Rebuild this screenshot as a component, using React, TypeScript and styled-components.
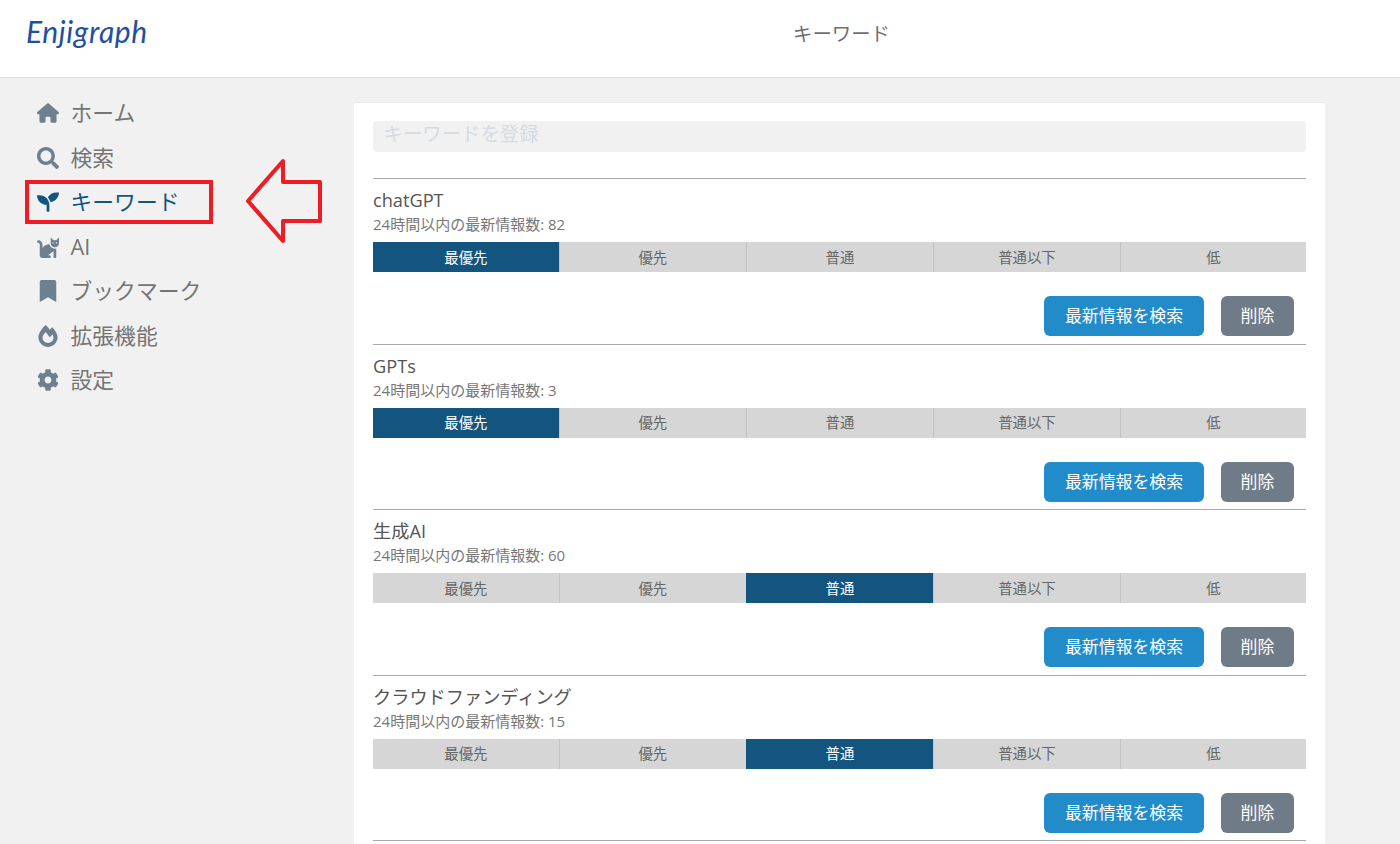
import React from "react";
import styled, { createGlobalStyle } from "styled-components";
import { FaSearch, FaSeedling, FaCat, FaBookmark, FaCog, FaFireAlt } from "react-icons/fa";
import { FaHouse } from "react-icons/fa6";

const Global = createGlobalStyle`
  html, body { margin: 0; padding: 0; height: 100%; overflow: hidden; background: #f1f1f1; }
  body { font-family: "Open Sans", "Noto Sans CJK JP", sans-serif; }
  * { box-sizing: border-box; }
`;

const Page = styled.div`
  width: 1400px;
  height: 844px;
  display: flex;
  flex-direction: column;
  overflow: hidden;
  background: #f1f1f1;
`;

const Header = styled.header`
  height: 78px;
  flex: none;
  display: flex;
  align-items: flex-start;
  background: #fff;
  border-bottom: 1px solid #d9dee2;
`;

const Logo = styled.div`
  width: 354px;
  padding: 12px 0 0 26px;
  font-family: "Lato", sans-serif;
  font-style: italic;
  font-size: 30px;
  line-height: 38px;
  letter-spacing: 0.6px;
  color: #1f4f9e;
`;

const PageTitle = styled.h1`
  flex: none;
  width: 975px;
  margin: 0;
  padding-top: 20px;
  text-align: center;
  font-size: 19.4px;
  line-height: 28px;
  font-weight: 400;
  color: #6f6f6f;
`;

const Body = styled.div`
  flex: 1;
  display: flex;
  min-height: 0;
`;

const Sidebar = styled.nav`
  position: relative;
  width: 354px;
  flex: none;
  padding: 13px 0 0 36px;
  display: flex;
  flex-direction: column;
`;

const NavItem = styled.div<{ $active?: boolean }>`
  position: relative;
  height: 44.5px;
  display: flex;
  align-items: center;
  gap: 10.5px;
  font-size: 21.8px;
  line-height: 30px;
  color: ${(p) => (p.$active ? "#14557f" : "#757575")};
`;

const NavIcon = styled.span<{ $active?: boolean }>`
  width: 24px;
  flex: none;
  display: flex;
  justify-content: center;
  font-size: 22px;
  color: ${(p) => (p.$active ? "#14557f" : "#6e7f8f")};
`;

const Highlight = styled.div`
  position: absolute;
  left: -11px;
  top: 0px;
  width: 188px;
  height: 44px;
  border: 4px solid #ee1c25;
`;

const Arrow = styled.svg`
  position: absolute;
  left: 209px;
  top: -22px;
  width: 80px;
  height: 88px;
`;

const Card = styled.main`
  width: 971px;
  flex: none;
  margin-top: 24px;
  padding: 18px 19px 0;
  background: #fff;
  border-top: 1px solid #e3e8ec;
  overflow: hidden;
`;

const KeywordInput = styled.input`
  display: block;
  width: 100%;
  height: 31px;
  padding: 0 10.5px 7px;
  border: 0;
  border-radius: 4px;
  background: #f1f1f1;
  font: inherit;
  font-size: 19.4px;
  &::placeholder {
    color: #d3dce2;
    opacity: 1;
  }
`;

const List = styled.div`
  margin-top: 26px;
`;

const Row = styled.section`
  height: 165.5px;
  padding-top: 9px;
  border-top: 1px solid #a9a9a9;
`;

const ListEnd = styled.div`
  border-top: 1px solid #a9a9a9;
`;

const Title = styled.div`
  font-size: 18.2px;
  line-height: 24px;
  color: #555;
`;

const Count = styled.div`
  font-size: 15px;
  line-height: 24px;
  color: #777;
`;

const Segments = styled.div`
  display: grid;
  grid-template-columns: 185.7px 187.3px 187px 187px 1fr;
  height: 30px;
  margin-top: 6px;
`;

const Segment = styled.div<{ $on?: boolean }>`
  display: flex;
  align-items: center;
  justify-content: center;
  padding-bottom: 2px;
  font-size: 14.4px;
  background: ${(p) => (p.$on ? "#14557f" : "#d6d6d6")};
  color: ${(p) => (p.$on ? "#fff" : "#666")};
  border-left: 1px solid ${(p) => (p.$on ? "#14557f" : "#c4c4c4")};
  &:first-child { border-left: 0; }
`;

const Actions = styled.div`
  display: flex;
  justify-content: flex-end;
  gap: 17px;
  margin-top: 24px;
  padding-right: 12px;
`;

const Button = styled.button<{ $kind: "primary" | "muted" }>`
  height: 40px;
  width: ${(p) => (p.$kind === "primary" ? "160px" : "73px")};
  border: 0;
  border-radius: 6px;
  padding: 0 0 3px;
  font: inherit;
  font-size: 16.9px;
  color: #fff;
  background: ${(p) => (p.$kind === "primary" ? "#228bca" : "#6f7c88")};
`;

const nav = [
  { label: "ホーム", Icon: FaHouse },
  { label: "検索", Icon: FaSearch },
  { label: "キーワード", Icon: FaSeedling, active: true },
  { label: "AI", Icon: FaCat },
  { label: "ブックマーク", Icon: FaBookmark },
  { label: "拡張機能", Icon: FaFireAlt },
  { label: "設定", Icon: FaCog },
];

const levels = ["最優先", "優先", "普通", "普通以下", "低"];

const keywords = [
  { name: "chatGPT", count: 82, level: 0 },
  { name: "GPTs", count: 3, level: 0 },
  { name: "生成AI", count: 60, level: 2 },
  { name: "クラウドファンディング", count: 15, level: 2 },
];

export default function App() {
  return (
    <Page>
      <Global />
      <Header>
        <Logo>Enjigraph</Logo>
        <PageTitle>キーワード</PageTitle>
      </Header>
      <Body>
        <Sidebar>
          {nav.map(({ label, Icon, active }) => (
            <NavItem key={label} $active={active}>
              <NavIcon $active={active}>
                <Icon />
              </NavIcon>
              {label}
              {active && (
                <>
                  <Highlight />
                  <Arrow viewBox="0 0 80 88">
                    <path
                      d="M3 43 L38 3 L38 24 L75 24 L75 63 L38 63 L38 83 Z"
                      fill="none"
                      stroke="#ee1c25"
                      strokeWidth="4"
                      strokeLinejoin="round"
                    />
                  </Arrow>
                </>
              )}
            </NavItem>
          ))}
        </Sidebar>
        <Card>
          <KeywordInput placeholder="キーワードを登録" readOnly />
          <List>
            {keywords.map((k) => (
              <Row key={k.name}>
                <Title>{k.name}</Title>
                <Count>24時間以内の最新情報数: {k.count}</Count>
                <Segments>
                  {levels.map((l, i) => (
                    <Segment key={l} $on={i === k.level}>
                      {l}
                    </Segment>
                  ))}
                </Segments>
                <Actions>
                  <Button $kind="primary">最新情報を検索</Button>
                  <Button $kind="muted">削除</Button>
                </Actions>
              </Row>
            ))}
            <ListEnd />
          </List>
        </Card>
      </Body>
    </Page>
  );
}
